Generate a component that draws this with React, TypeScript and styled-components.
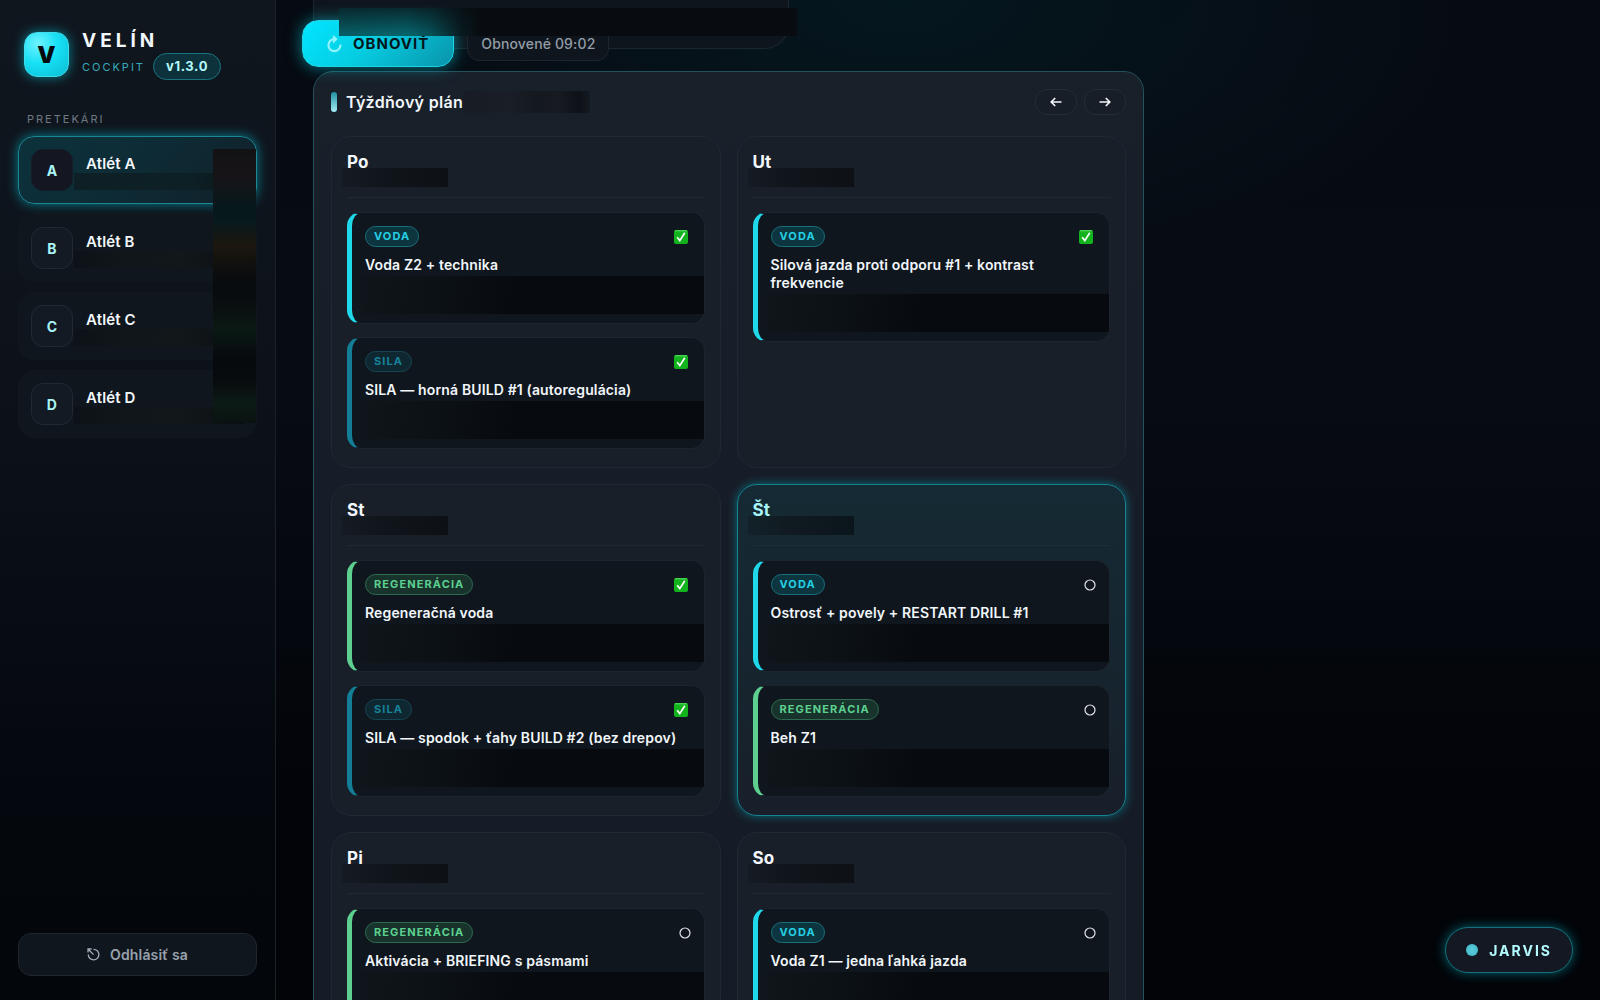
import React from "react";
import styled, { createGlobalStyle, css } from "styled-components";

const GlobalStyle = createGlobalStyle`
  *, *::before, *::after { box-sizing: border-box; }
  body {
    margin: 0;
    background: #03060b;
    color: #f1f6fb;
    font-family: Inter, "Liberation Sans", sans-serif;
    font-size: 14px;
    letter-spacing: 0.01em;
  }
  button { font: inherit; letter-spacing: inherit; color: inherit; cursor: pointer; }
  h1, h2, h3, p, ul { margin: 0; padding: 0; }
  ul { list-style: none; }
`;

const Shell = styled.div`
  display: grid;
  grid-template-columns: 276px minmax(0, 1fr);
  height: 100vh;
  overflow: hidden;
  background:
    radial-gradient(ellipse 620px 300px at 900px 0, rgba(0, 90, 100, 0.16), transparent),
    linear-gradient(180deg, #060a11 0%, #070b13 40%, #020409 80%, #020408 100%);
`;

const Sidebar = styled.aside`
  display: flex;
  flex-direction: column;
  padding: 29px 18px 24px;
  border-right: 1px solid #1b2129;
  background: linear-gradient(180deg, #10161e 0%, #0e141c 25%, #0a0f18 50%, #04070d 80%, #03060b 100%);
`;

const Brand = styled.header`
  display: flex;
  align-items: center;
  gap: 13px;
  padding-left: 6px;
`;

const Logo = styled.div`
  display: grid;
  place-items: center;
  width: 45px;
  height: 45px;
  border: 1px solid #3fdcec;
  border-radius: 13px;
  background: radial-gradient(circle at 30% 25%, #6ff3ff 0%, #17e0f5 45%, #0bbcd2 100%);
  box-shadow: 0 0 12px rgba(0, 220, 240, 0.55);
  color: #04090d;
  font-size: 23px;
  font-weight: 900;
`;

const BrandName = styled.h1`
  font-size: 19px;
  line-height: 24px;
  font-weight: 700;
  letter-spacing: 4px;
`;

const BrandSub = styled.div`
  display: flex;
  align-items: center;
  gap: 8px;
  color: #35a9b9;
  font-size: 11px;
  letter-spacing: 2px;
`;

const Version = styled.span`
  padding: 0 12px;
  border: 1px solid #197480;
  border-radius: 14px;
  background: #0d323c;
  color: #b4fbff;
  font-size: 13px;
  line-height: 25px;
  font-weight: 700;
  letter-spacing: 0.05em;
`;

const SideLabel = styled.h2`
  padding: 30px 0 8px 9px;
  color: #6f7984;
  font-size: 11px;
  line-height: 18px;
  font-weight: 400;
  letter-spacing: 2px;
`;

const AthleteArea = styled.nav`
  position: relative;
`;

const AthleteList = styled.ul`
  display: flex;
  flex-direction: column;
  gap: 10px;
`;

const Athlete = styled.button<{ $active?: boolean }>`
  display: flex;
  align-items: center;
  gap: 1px;
  width: 100%;
  height: 68px;
  padding: 0 12px;
  border: 1px solid #10171e;
  border-radius: 16px;
  background: #10161d;
  text-align: left;
  ${(p) =>
    p.$active &&
    css`
      border-color: #1b8794;
      background: linear-gradient(135deg, #0c323c 0%, #0e2b35 50%, #112029 100%);
      box-shadow: 0 0 12px rgba(0, 200, 220, 0.6);
    `}
`;

const Avatar = styled.span<{ $active?: boolean }>`
  display: grid;
  place-items: center;
  flex: none;
  width: 42px;
  height: 42px;
  border: 1px solid ${(p) => (p.$active ? "#161d27" : "#222932")};
  border-radius: 12px;
  background: ${(p) => (p.$active ? "#141722" : "#131a23")};
  color: #a9f4f6;
  font-size: 14px;
  font-weight: 700;
`;

const AthleteText = styled.span`
  display: flex;
  flex-direction: column;
  flex: 1;
  padding-top: 4px;
  font-size: 15px;
  line-height: 18px;
  font-weight: 600;
`;

const AthleteName = styled.span`
  padding-left: 12px;
`;

const AthleteNote = styled.span<{ $active?: boolean }>`
  height: 17px;
  background: ${(p) =>
    p.$active
      ? "linear-gradient(90deg, #0e2026, #0d2025 70%, #0a1519)"
      : "linear-gradient(90deg, #0d1218, #11161b 30%, #12171a 65%, #0a0e12)"};
`;

const StatusStrip = styled.div`
  position: absolute;
  top: 13px;
  right: 1px;
  width: 43px;
  height: 274px;
  background: linear-gradient(
    180deg,
    #121215 0%, #171418 10%, #06181c 22%, #07191d 26%, #1c170f 35%, #090b0e 47%,
    #080c0f 54%, #0b1914 66%, #060a0e 76%, #070b0e 84%, #0d1b16 93%, #091210 100%
  );
`;

const Logout = styled.button`
  display: flex;
  align-items: center;
  justify-content: center;
  gap: 10px;
  height: 43px;
  margin-top: auto;
  border: 1px solid #1f262e;
  border-radius: 13px;
  background: #10161d;
  color: #97a1ac;
  font-size: 14px;
  font-weight: 600;
`;

const Main = styled.main`
  position: relative;
  padding: 0 37px;
  overflow: hidden;
`;

const PrevCard = styled.section`
  width: 476px;
  height: 49px;
  border: 1px solid #1b262d;
  border-top: 0;
  border-radius: 0 0 24px 24px;
  background: #0f151c;
`;

const TopBar = styled.div`
  position: absolute;
  top: 20px;
  left: 26px;
  display: flex;
  gap: 13px;
`;

const Refresh = styled.button`
  display: flex;
  align-items: center;
  gap: 11px;
  height: 47px;
  padding: 0 24px;
  border: 1px solid #1fd3e4;
  border-radius: 16px;
  background: linear-gradient(135deg, #00e5ff 0%, #06cde2 45%, #0a94aa 100%);
  box-shadow: 0 0 16px rgba(0, 220, 240, 0.55);
  color: #03151b;
  font-size: 15px;
  font-weight: 700;
  letter-spacing: 1px;
`;

const Refreshed = styled.p`
  height: 41px;
  padding: 0 13px;
  border: 1px solid #1d252d;
  border-radius: 12px;
  background: #0f151c;
  color: #939da8;
  font-size: 14px;
  line-height: 46px;
  font-weight: 500;
`;

const TopMask = styled.div`
  position: absolute;
  top: 8px;
  left: 63px;
  width: 458px;
  height: 28px;
  background:
    linear-gradient(180deg, rgba(8, 12, 16, 0.65) 0%, rgba(8, 12, 16, 0) 90%),
    linear-gradient(90deg, #075b62 0%, #07626a 15%, #074f56 20%, #08191e 27%, #080c10 31%);
`;

const Panel = styled.section`
  max-width: 831px;
  margin-top: 22px;
  padding: 17px;
  border: 1px solid #24515b;
  border-radius: 20px;
  background: linear-gradient(180deg, #18202a 0%, #171d28 40%, #141b25 100%);
`;

const PanelHead = styled.header`
  display: flex;
  align-items: center;
  height: 26px;
  margin-bottom: 21px;
`;

const Accent = styled.span`
  width: 6px;
  height: 20px;
  border-radius: 3px;
  background: linear-gradient(180deg, #1f8fa0, #a5eef5);
`;

const PanelTitle = styled.h2`
  margin-left: 9px;
  font-size: 16px;
  font-weight: 600;
  letter-spacing: 0.02em;
`;

const TitleMask = styled.span`
  width: 127px;
  height: 22px;
  background: linear-gradient(90deg, #171c25 0%, #1a1e26 35%, #14181f 60%, #171a20 75%, #0e1218 92%, #141a22 100%);
`;

const Arrows = styled.div`
  display: flex;
  gap: 7px;
  margin-left: auto;
`;

const ArrowButton = styled.button`
  display: grid;
  place-items: center;
  width: 42px;
  height: 26px;
  padding: 0;
  border: 1px solid #242c36;
  border-radius: 12px;
  background: #171e27;
`;

const Days = styled.div`
  display: grid;
  grid-template-columns: repeat(2, minmax(0, 1fr));
  grid-auto-rows: minmax(332px, auto);
  gap: 16px;
`;

const Day = styled.article<{ $today?: boolean }>`
  padding: 15px;
  border: 1px solid #202833;
  border-radius: 20px;
  background: #181f29;
  ${(p) =>
    p.$today &&
    css`
      border-color: #168391;
      background: linear-gradient(180deg, #152a34 0%, #162630 45%, #181f2a 100%);
      box-shadow: 0 0 10px rgba(0, 190, 210, 0.5);
    `}
`;

const DayHead = styled.header<{ $today?: boolean }>`
  height: 46px;
  margin-bottom: 14px;
  border-bottom: 1px solid ${(p) => (p.$today ? "#1a303a" : "#202932")};
`;

const DayName = styled.h3<{ $today?: boolean }>`
  height: 16px;
  color: ${(p) => (p.$today ? "#a8f5f8" : "#f4f8fc")};
  font-size: 17px;
  line-height: 20px;
  font-weight: 700;
`;

const DayMask = styled.div<{ $today?: boolean }>`
  position: relative;
  width: 106px;
  height: 19px;
  margin-left: -5px;
  background: ${(p) =>
    p.$today
      ? "linear-gradient(90deg, #13222a 0%, #101a20 40%, #0b161c 100%)"
      : "linear-gradient(90deg, #151b23 0%, #10151b 40%, #0d1116 100%)"};
`;

const Sessions = styled.div`
  display: flex;
  flex-direction: column;
  gap: 13px;
`;

const Session = styled.section<{ $color: string }>`
  padding: 13px 0 9px 13px;
  border: 1px solid #1d242d;
  border-left: 5px solid ${(p) => p.$color};
  border-radius: 14px;
  background: #10161d;
`;

const SessionHead = styled.div`
  display: flex;
  align-items: center;
  justify-content: space-between;
  height: 21px;
  margin-bottom: 9px;
  padding-right: 13px;
`;

const tones = {
  voda: { bar: "#1fd8ea", text: "#25cfe2", fill: "#0c3540", line: "#19707d" },
  sila: { bar: "#127f97", text: "#17829a", fill: "#0e2730", line: "#164653" },
  regen: { bar: "#5dd090", text: "#5dd090", fill: "#18332c", line: "#2f6b51" },
};
type Tone = keyof typeof tones;

const Tag = styled.span<{ $tone: Tone }>`
  padding: 0 8px;
  border: 1px solid ${(p) => tones[p.$tone].line};
  border-radius: 11px;
  background: ${(p) => tones[p.$tone].fill};
  color: ${(p) => tones[p.$tone].text};
  font-size: 11px;
  line-height: 19px;
  font-weight: 700;
  letter-spacing: 0.1em;
`;

const SessionTitle = styled.h4`
  margin: 0;
  padding-right: 14px;
  font-size: 14px;
  line-height: 18px;
  font-weight: 600;
`;

const NoteMask = styled.div`
  height: 38px;
  margin: 2px 0 0 -4px;
  background: linear-gradient(100deg, #10151b 0%, #0c1115 22%, #070b0f 45%, #070a0e 100%);
`;

const Jarvis = styled.button`
  position: fixed;
  right: 27px;
  bottom: 27px;
  display: flex;
  align-items: center;
  gap: 11px;
  height: 46px;
  padding: 0 20px;
  border: 1px solid #14707d;
  border-radius: 23px;
  background: #131822;
  box-shadow: 0 0 12px rgba(0, 190, 210, 0.5);
  color: #b4fbff;
  font-size: 14px;
  font-weight: 700;
  letter-spacing: 2px;
`;

const Dot = styled.span`
  width: 12px;
  height: 12px;
  border-radius: 50%;
  background: radial-gradient(circle, #5bcbd9, #43b6c6);
`;

const DoneIcon = () => (
  <svg width="14" height="14" viewBox="0 0 14 14" role="img" aria-label="Hotovo">
    <rect width="14" height="14" rx="2" fill="#12b31c" />
    <path d="M1 0.8h12" stroke="#5fe06a" strokeWidth="1" />
    <path d="M3.2 7.2 5.8 10.6 10.8 2.8" fill="none" stroke="#fff" strokeWidth="1.7" />
  </svg>
);

const OpenIcon = () => (
  <svg width="12" height="12" viewBox="0 0 12 12" role="img" aria-label="Otvorené">
    <circle cx="6" cy="6" r="5" fill="none" stroke="#dfe5eb" strokeWidth="1.2" />
  </svg>
);

const StatusBox = styled.span<{ $done: boolean }>`
  display: flex;
  margin-right: ${(p) => (p.$done ? "3px" : "0")};
`;

const RefreshIcon = () => (
  <svg width="15" height="18" viewBox="0 0 15 18" fill="none" stroke="#8ff4fc" strokeWidth="2.2" aria-hidden="true">
    <path d="M13.4 9.5A6 6 0 1 1 8 4.2" />
    <path d="M6.4 0.8 10.2 4.2 6.4 7.8V4.2z" fill="#8ff4fc" strokeWidth="1" />
  </svg>
);

const LogoutIcon = () => (
  <svg width="13" height="13" viewBox="0 0 13 13" fill="none" stroke="#a3adb7" strokeWidth="1.3" aria-hidden="true">
    <path d="M6.5 1.3a5.3 5.3 0 1 1-5.2 5.2" />
    <path d="M1 4.6V1h3.6M1.2 1.2 6.6 6.6" />
  </svg>
);

const Arrow = ({ flip }: { flip?: boolean }) => (
  <svg width="12" height="10" viewBox="0 0 12 10" fill="none" stroke="#f4f8fc" strokeWidth="1.6" aria-hidden="true">
    <path d={flip ? "M0.5 5h10.3M6.8 1l4 4-4 4" : "M11.5 5H1.2M5.2 1l-4 4 4 4"} />
  </svg>
);

type SessionData = { tone: Tone; label: string; title: string; done: boolean };
const REGEN = "REGENERÁCIA";

const week: { name: string; today?: boolean; sessions: SessionData[] }[] = [
  {
    name: "Po",
    sessions: [
      { tone: "voda", label: "VODA", title: "Voda Z2 + technika", done: true },
      { tone: "sila", label: "SILA", title: "SILA — horná BUILD #1 (autoregulácia)", done: true },
    ],
  },
  {
    name: "Ut",
    sessions: [{ tone: "voda", label: "VODA", title: "Silová jazda proti odporu #1 + kontrast frekvencie", done: true }],
  },
  {
    name: "St",
    sessions: [
      { tone: "regen", label: REGEN, title: "Regeneračná voda", done: true },
      { tone: "sila", label: "SILA", title: "SILA — spodok + ťahy BUILD #2 (bez drepov)", done: true },
    ],
  },
  {
    name: "Št",
    today: true,
    sessions: [
      { tone: "voda", label: "VODA", title: "Ostrosť + povely + RESTART DRILL #1", done: false },
      { tone: "regen", label: REGEN, title: "Beh Z1", done: false },
    ],
  },
  {
    name: "Pi",
    sessions: [{ tone: "regen", label: REGEN, title: "Aktivácia + BRIEFING s pásmami", done: false }],
  },
  {
    name: "So",
    sessions: [{ tone: "voda", label: "VODA", title: "Voda Z1 — jedna ľahká jazda", done: false }],
  },
];

export default function App() {
  return (
    <>
      <GlobalStyle />
      <Shell>
        <Sidebar>
          <Brand>
            <Logo>V</Logo>
            <div>
              <BrandName>VELÍN</BrandName>
              <BrandSub>
                COCKPIT <Version>v1.3.0</Version>
              </BrandSub>
            </div>
          </Brand>
          <SideLabel>PRETEKÁRI</SideLabel>
          <AthleteArea>
            <AthleteList>
              {["A", "B", "C", "D"].map((letter, i) => (
                <li key={letter}>
                  <Athlete type="button" $active={i === 0}>
                    <Avatar $active={i === 0}>{letter}</Avatar>
                    <AthleteText>
                      <AthleteName>Atlét {letter}</AthleteName>
                      <AthleteNote $active={i === 0} />
                    </AthleteText>
                  </Athlete>
                </li>
              ))}
            </AthleteList>
            <StatusStrip />
          </AthleteArea>
          <Logout type="button">
            <LogoutIcon />
            Odhlásiť sa
          </Logout>
        </Sidebar>
        <Main>
          <PrevCard />
          <Panel>
            <PanelHead>
              <Accent />
              <PanelTitle>Týždňový plán</PanelTitle>
              <TitleMask />
              <Arrows>
                <ArrowButton type="button" aria-label="Predchádzajúci týždeň">
                  <Arrow />
                </ArrowButton>
                <ArrowButton type="button" aria-label="Nasledujúci týždeň">
                  <Arrow flip />
                </ArrowButton>
              </Arrows>
            </PanelHead>
            <Days>
              {week.map((day) => (
                <Day key={day.name} $today={day.today}>
                  <DayHead $today={day.today}>
                    <DayName $today={day.today}>{day.name}</DayName>
                    <DayMask $today={day.today} />
                  </DayHead>
                  <Sessions>
                    {day.sessions.map((s) => (
                      <Session key={s.title} $color={tones[s.tone].bar}>
                        <SessionHead>
                          <Tag $tone={s.tone}>{s.label}</Tag>
                          <StatusBox $done={s.done}>{s.done ? <DoneIcon /> : <OpenIcon />}</StatusBox>
                        </SessionHead>
                        <SessionTitle>{s.title}</SessionTitle>
                        <NoteMask />
                      </Session>
                    ))}
                  </Sessions>
                </Day>
              ))}
            </Days>
          </Panel>
          <TopBar>
            <Refresh type="button">
              <RefreshIcon />
              OBNOVIŤ
            </Refresh>
            <Refreshed>Obnovené 09:02</Refreshed>
          </TopBar>
          <TopMask />
        </Main>
      </Shell>
      <Jarvis type="button">
        <Dot />
        JARVIS
      </Jarvis>
    </>
  );
}
